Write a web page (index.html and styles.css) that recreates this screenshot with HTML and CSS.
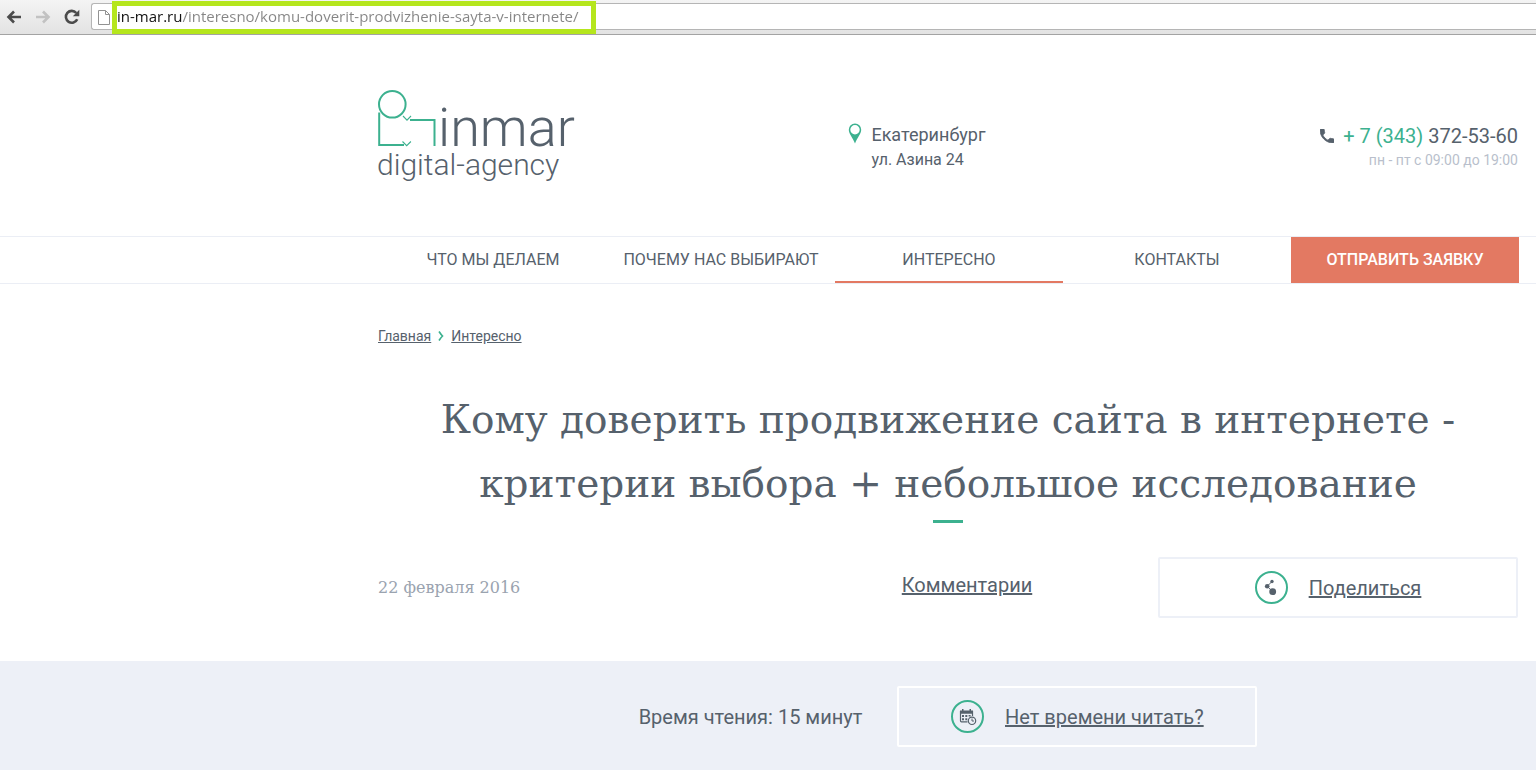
FILE: index.html
```html
<!DOCTYPE html>
<html lang="ru">
<head>
<meta charset="utf-8">
<title>Кому доверить продвижение сайта в интернете</title>
<link rel="stylesheet" href="styles.css">
</head>
<body>
<div class="browser">
  <button class="tool" aria-label="Назад"><svg width="16" height="14" viewBox="0 0 16 14"><path d="M15 7H3M8 1.500L2.500 7L8 12.500" fill="none" stroke="#4b4b4b" stroke-width="2.600"/></svg></button>
  <button class="tool" aria-label="Вперёд"><svg width="16" height="14" viewBox="0 0 16 14"><path d="M1 7h12M8 1.500L13.500 7L8 12.500" fill="none" stroke="#c2c2c2" stroke-width="2.600"/></svg></button>
  <button class="tool" aria-label="Обновить"><svg width="16" height="16" viewBox="0 0 16 16"><path d="M13.200 10.200A5.900 5.900 0 1 1 12.300 4" fill="none" stroke="#4b4b4b" stroke-width="2.600"/><path d="M15.300 0.800V7.300H8.800z" fill="#4b4b4b"/></svg></button>
  <div class="omnibox">
    <svg width="12" height="16" viewBox="0 0 12 16"><path d="M.5 1.500h7l4 4v10H.5zM7.500 1.500v4h4" fill="#fff" stroke="#929292"/></svg>
    <div class="url-wrap"><input class="url" aria-label="Адрес страницы" readonly value="in-mar.ru/interesno/komu-doverit-prodvizhenie-sayta-v-internete/"></div>
  </div>
</div>

<header class="container header">
  <a class="logo" href="#" aria-label="inmar digital-agency">
    <svg width="204" height="98" viewBox="0 0 204 98">
      <g fill="none" stroke="#3cb18f" stroke-width="2">
        <circle cx="15.300" cy="15.300" r="13.300"/>
        <path d="M2.200 23.500V56H27M33 31H57.500V57"/>
        <path d="M26 27l4 4.200 4-4.200M25.500 52.500l4.200 4.200 4.200-4.200" stroke-width="1.100"/>
      </g>
      <text class="logo-name" x="61" y="57">inmar</text>
      <text class="logo-sub" x="0" y="86">digital-agency</text>
    </svg>
  </a>
  <address class="place">
    <svg class="pin" width="14" height="21" viewBox="0 0 14 21"><path fill="#3cb18f" fill-rule="evenodd" d="M7 0.500a6.200 6.200 0 0 1 6.200 6.200C13.200 11 9.500 14 7 20.500C4.500 14 .8 11 .8 6.700A6.200 6.200 0 0 1 7 .5zM7 2a4.700 4.700 0 1 0 0 9.400A4.700 4.700 0 0 0 7 2z"/></svg>
    <div><div class="city">Екатеринбург</div><div class="street">ул. Азина 24</div></div>
  </address>
  <div class="contact">
    <a class="phone" href="tel:+73433725360"><svg width="14" height="14" viewBox="3 3 18 18"><path fill="#56616c" stroke="#56616c" d="M6.620 10.790c1.440 2.830 3.760 5.140 6.590 6.590l2.200-2.200c.27-.27.67-.36 1.020-.24 1.120.37 2.330.57 3.570.57.550 0 1 .45 1 1V20c0 .55-.45 1-1 1-9.390 0-17-7.610-17-17 0-.55.45-1 1-1h3.500c.55 0 1 .45 1 1 0 1.250.2 2.450.57 3.570.110.350.030.740-.25 1.020l-2.200 2.200z"/></svg><span><span class="code">+ 7 (343)</span> 372-53-60</span></a>
    <div class="hours">пн - пт с 09:00 до 19:00</div>
  </div>
</header>

<nav class="nav">
  <div class="menu">
    <a href="#">ЧТО МЫ ДЕЛАЕМ</a>
    <a href="#">ПОЧЕМУ НАС ВЫБИРАЮТ</a>
    <a class="active" href="#">ИНТЕРЕСНО</a>
    <a href="#">КОНТАКТЫ</a>
    <button class="request">ОТПРАВИТЬ ЗАЯВКУ</button>
  </div>
</nav>

<main>
  <div class="container article">
    <div class="crumbs"><a href="#">Главная</a><svg width="6" height="10" viewBox="0 0 6 10"><path d="M1 .5c1 1.500 2 3 3.500 4.500C3 6.500 2 8 1 9.500" fill="none" stroke="#3cb18f" stroke-width="1.700"/></svg><a href="#">Интересно</a></div>
    <h1>Кому доверить продвижение сайта в интернете -<br>критерии выбора + небольшое исследование</h1>
    <div class="meta">
      <time datetime="2016-02-22">22 февраля 2016</time>
      <a class="comments" href="#">Комментарии</a>
      <button class="box share">
        <svg width="33" height="33" viewBox="0 0 33 33"><circle cx="16.500" cy="16.500" r="15.500" fill="none" stroke="#3cb18f" stroke-width="2"/><g fill="#56616c"><circle cx="17" cy="10.500" r="1.700"/><circle cx="12.200" cy="15.300" r="2.300"/><circle cx="17.700" cy="20.700" r="3.400"/></g><path d="M17 10.500l-4.800 4.800 5.500 5.400" fill="none" stroke="#56616c" stroke-width="1"/></svg>
        <span>Поделиться</span>
      </button>
    </div>
  </div>
  <section class="reading">
    <div class="container reading-row">
      <span>Время чтения: 15 минут</span>
      <button class="box notime">
        <svg width="33" height="33" viewBox="0 0 33 33"><circle cx="16.500" cy="16.500" r="15.500" fill="none" stroke="#3cb18f" stroke-width="2"/><g fill="none" stroke="#56616c"><path d="M16.500 21.800H10.500a1 1 0 0 1-1-1V11.500H21.500V16" stroke-width="1.200"/><circle cx="21" cy="20.800" r="3.700" stroke-width="1.200"/><path d="M21 18.500v2.500h2"/></g><path fill="#56616c" d="M9 10.500h13v3.300H9zM11 9h1.500v2H11zM18.500 9H20v2h-1.500zM11 15h2v2h-2zM14.300 15h2v2h-2zM17.600 15h2v1.500h-2zM11 18.300h2v2h-2zM14.300 18.300h2v2h-2z"/></svg>
        <span>Нет времени читать?</span>
      </button>
    </div>
  </section>
</main>
</body>
</html>
```
FILE: styles.css
```css
* { box-sizing: border-box; }
body { margin: 0; background: #fff; color: #56616c; font-family: Roboto, "Liberation Sans", sans-serif; min-height: 100vh; display: flex; flex-direction: column; }
a { color: inherit; }
button { font: inherit; color: inherit; border: 0; background: none; padding: 0; cursor: pointer; }
svg { flex: none; display: block; }

.browser { height: 35px; display: flex; align-items: flex-start; gap: 13px; padding: 3px 0 0 6px; background: linear-gradient(#f4f4f4, #e3e3e3); border-bottom: 1px solid #a3a3a3; }
.tool { height: 27px; display: flex; align-items: center; }
.omnibox { flex: 1; height: 27px; margin-left: -2px; padding-left: 6px; display: flex; align-items: center; gap: 7px; background: #fff; border: 1px solid #b5b5b5; border-right: 0; border-radius: 3px 0 0 3px; }
.url-wrap { position: relative; width: 474px; }
.url-wrap::after { content: ""; position: absolute; inset: -3px -5px -5px -5px; border: 5px solid #b5e61d; pointer-events: none; }
.url { display: block; width: 100%; height: 25px; border: 0; padding: 0 0 2px; outline: 0; font: 15px "Segoe UI", "Open Sans", "Noto Sans", sans-serif; color: transparent; background: linear-gradient(90deg, #111 65px, #858585 65px); -webkit-background-clip: text; background-clip: text; }

.container { padding-left: 378px; padding-right: 18px; }

.header { display: grid; grid-template-columns: 7fr 5fr 5fr; height: 201px; padding-top: 54px; }
.logo { margin-left: -1px; text-decoration: none; }
.logo-name { font-size: 54px; font-weight: 300; fill: #56616c; }
.logo-sub { font-size: 30px; font-weight: 300; fill: #56616c; }
.place { display: flex; gap: 9px; padding: 33px 0 0 1px; font-style: normal; }
.pin { margin-top: 1px; }
.city { font-size: 18px; line-height: 26px; }
.street { font-size: 16px; line-height: 24px; }
.contact { justify-self: end; text-align: right; padding-top: 34px; }
.phone { display: flex; align-items: center; gap: 9px; font-size: 20px; line-height: 26px; text-decoration: none; }
.code { color: #3cb18f; }
.hours { font-size: 14px; line-height: 22px; color: #b9bfcc; }

.nav { border-top: 1px solid #ebeef5; border-bottom: 1px solid #ebeef5; }
.menu { display: grid; grid-template-columns: repeat(5, 1fr); height: 46px; padding: 0 17px 0 379px; font-size: 16px; }
.menu > * { display: flex; align-items: center; justify-content: center; padding-bottom: 2px; text-decoration: none; white-space: nowrap; }
.active { box-shadow: inset 0 -2px #e37962; }
.request { background: #e37962; color: #fff; font-weight: 500; }

.crumbs { display: flex; align-items: center; gap: 7px; padding-top: 41px; font-size: 14px; line-height: 22px; }
h1 { margin: 41px 0 0; text-align: center; font: 400 39px/64px "Roboto Slab", "DejaVu Serif", serif; white-space: nowrap; }
h1::after { content: ""; display: block; width: 30px; height: 3px; margin: 4px auto 0; background: #3cb18f; }
.meta { display: grid; grid-template-columns: 1fr auto 1fr; align-items: center; padding: 34px 0 43px; font-size: 20px; }
.meta time { font: 400 16px "Roboto Slab", "DejaVu Serif", serif; color: #9aa3af; }
.comments { margin-left: 38px; padding-bottom: 6px; }
.box { width: 360px; height: 61px; display: flex; align-items: center; justify-content: center; gap: 21px; border: 2px solid #edf0f7; border-radius: 2px; }
.box span { text-decoration: underline; }
.share { justify-self: end; }
.reading { flex: 1; background: #edf0f7; }
main { flex: 1; display: flex; flex-direction: column; }
.reading-row { display: flex; align-items: center; justify-content: center; gap: 35px; padding-top: 25px; padding-bottom: 23px; font-size: 20px; }
.notime { border-color: #fff; }
```
